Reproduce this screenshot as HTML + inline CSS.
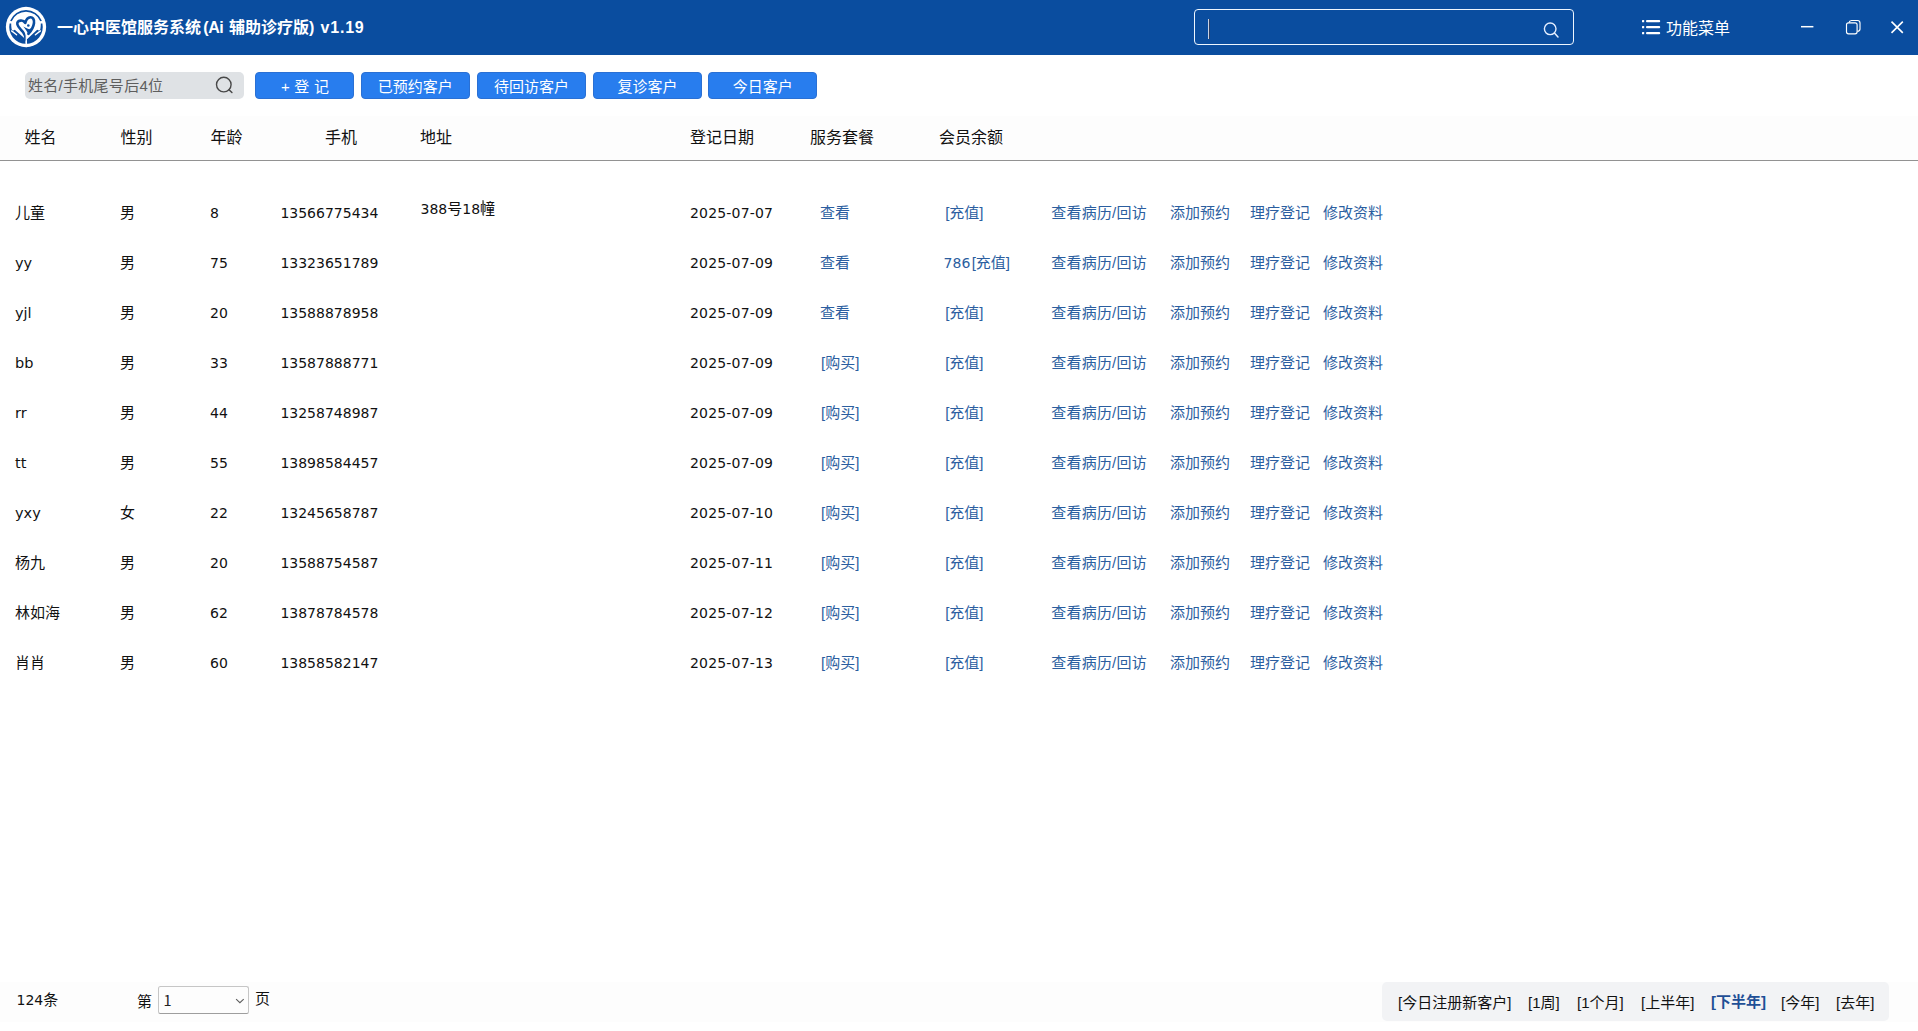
<!DOCTYPE html>
<html lang="zh-CN"><head><meta charset="utf-8"><title>一心中医馆服务系统</title>
<style>
*{box-sizing:border-box;margin:0;padding:0}
html,body{width:1918px;height:1031px;overflow:hidden;background:#fff}
body{position:relative;font-family:"Liberation Sans","Noto Sans CJK SC",sans-serif;font-size:15px;color:#111}
.abs{position:absolute;white-space:nowrap}
.n,.d{font-family:"DejaVu Sans","Noto Sans CJK SC",sans-serif;font-size:14px !important;letter-spacing:0}
.c .d,#ft .d{position:static}
.lat{font-family:"DejaVu Sans","Noto Sans CJK SC",sans-serif;font-size:14.5px !important}
/* title bar */
#tb{position:absolute;left:0;top:0;width:1918px;height:55px;background:#0a4d9f}
#logo{position:absolute;left:4px;top:5px;width:44px;height:44px}
#title{left:0;top:15.5px;height:24px;line-height:24px;font-size:16px;font-weight:bold;color:#fff}
#title span{position:absolute;top:0;white-space:nowrap}
#tsearch{position:absolute;left:1194px;top:9px;width:380px;height:36px;border:1px solid #eef6ff;border-radius:4px}
#caret{position:absolute;left:1208px;top:19px;width:2px;height:20px;background:linear-gradient(90deg,#c9d3e6 0 50%,#2c3e63 50% 100%)}
#menu{left:1666px;top:17px;height:24px;line-height:24px;font-size:16px;color:#fff}
.ico{position:absolute;overflow:visible}
/* toolbar */
#sinput{position:absolute;left:25px;top:72px;width:219px;height:27px;background:#dfe2e5;border-radius:5px}
#sinput span{position:absolute;left:3px;top:0;height:27px;line-height:27px;font-size:15px;color:#5e5e5e;white-space:nowrap;letter-spacing:.28px}
.btn{position:absolute;top:72px;height:27px;line-height:25px;padding-top:1px;background:#287dee;border:1px solid #2a70d4;border-radius:4px;color:#fff;font-size:15px;text-align:center;white-space:nowrap}
/* table header */
#th{position:absolute;left:0;top:116px;width:1918px;height:45px;background:#fdfdfd;border-bottom:1px solid #929292}
#th span{position:absolute;top:10px;height:24px;line-height:24px;font-size:16px;color:#111;white-space:nowrap}
/* rows */
.row{position:absolute;left:0;width:1918px;height:50px}
.c{position:absolute;top:14px;height:24px;line-height:24px;white-space:nowrap;font-size:15px}
a.c{color:#2b5e9f}
.c1{left:15px}.c2{left:120px}.c3{left:210px}.c4{left:280.4px}.c5{left:420.5px;top:10px}.c6{left:690px;letter-spacing:.18px !important}
.c7{left:820px}.c8{left:943.6px}.c9{left:1051.3px;letter-spacing:.2px}.c10{left:1170px}.c11{left:1250px}.c12{left:1323px}
/* footer */
#ft{position:absolute;left:0;top:982px;width:1918px;height:40px;background:#fdfdfd}
#ft .t{position:absolute;height:24px;line-height:24px;font-size:15px;white-space:nowrap}
#sel{position:absolute;left:158px;top:4px;width:90.6px;height:27.6px;border:1px solid #c6c6c6;border-bottom-color:#9e9e9e;border-radius:2.5px;background:#fdfdfd}
#sel span{position:absolute;left:4.4px;top:1px;height:24px;line-height:24px;font-size:14.5px;font-family:"Noto Sans CJK SC",sans-serif;color:#222}
#rng{position:absolute;left:1382px;top:0;width:507px;height:39px;background:#f2f3f5;border-radius:5px}
#rng span{position:absolute;top:9px;height:24px;line-height:24px;font-size:15px;white-space:nowrap}
#rng .on{font-weight:bold;color:#1f4f96;top:8px}
#ibeam{position:absolute;left:481.6px;top:200px;width:2.6px;height:14.6px;background:rgba(110,110,100,.7)}
.c7.br{left:821px}.c8.br{left:945.2px}
.c8 .d{margin-right:1.3px}
</style></head>
<body>
<div id="tb">
<svg id="logo" viewBox="4 5 44 44">
<circle cx="26" cy="27" r="20.15" fill="#fff"/>
<path d="M10.9 21 A16.3 16.3 0 0 1 41.1 21" fill="none" stroke="#0a4d9f" stroke-width="1.7"/>
<path d="M9.6 23.4 A16.8 16.8 0 1 0 42.4 23.4 L40.8 23.4 C40.8 26 40.6 28 40.2 29.8 L38.6 30.6 L37.2 29.7 L27 39.2 L27 44 L25.6 44 L25.6 39.2 L14.8 29.7 L13.4 30.6 L11.8 29.8 C11.4 28 11.2 26 11.2 23.4 Z" fill="#0a4d9f"/>
<path d="M40.4 30.9 L35.4 34.8 M11.6 30.9 L16.6 34.8" stroke="#fff" stroke-width="1.4" stroke-linecap="round" fill="none"/>
<path d="M28.4 33.8 C31 31 33.5 27 34 23 C34.5 19 32.5 17.2 30.5 17.3 C28 17.5 26 20 25.3 23 C24 21 22 20.4 20.5 20.6 C18 20.9 16.9 22.5 17.4 24.5 C18.1 27.5 21 29.5 23 32 C24.8 34.2 25.5 36.5 25.7 39.5" fill="none" stroke="#0a4d9f" stroke-width="2.6" stroke-linejoin="round" stroke-linecap="round"/>
<path d="M22.8 26.6 C25 27.2 27.5 29.2 29.3 29.3 L33.5 26.5 L28.5 35.2 C27.5 32 25.5 29 22.8 26.6 Z" fill="#0a4d9f"/>
<path d="M21.6 26.3 C23.8 28 25.8 31 26.3 36 L26.3 46.6" stroke="#fff" stroke-width="1.3" fill="none" stroke-linecap="round"/>
<circle cx="28.3" cy="25.5" r="1.3" fill="#0a4d9f"/>
</svg>
<div id="title" class="abs"><span style="left:57px">一心中医馆服务系统</span><span id="t2" style="left:203.3px;letter-spacing:-.5px">(Ai </span><span style="left:229px">辅助诊疗版</span><span id="t4" style="left:309px">)</span><span id="t5" style="left:320.5px;letter-spacing:.8px"> v1.19</span></div>
<div id="tsearch"></div><div id="caret"></div>
<svg class="ico" style="left:1540px;top:18px" width="22" height="22" viewBox="1540 18 22 22"><circle cx="1550.2" cy="28.8" r="5.8" fill="none" stroke="#e6efff" stroke-width="1.4"/><path d="M1554.4 33 L1558 36.9" stroke="#e6efff" stroke-width="1.5" stroke-linecap="round"/></svg>
<svg class="ico" style="left:1640px;top:18px" width="24" height="18" viewBox="1640 18 24 18" fill="#fff"><rect x="1642" y="20" width="2.2" height="2.2" rx=".5"/><rect x="1642" y="26" width="2.2" height="2.2" rx=".5"/><rect x="1642" y="32" width="2.2" height="2.2" rx=".5"/><rect x="1646" y="20" width="14.2" height="2.2" rx="1"/><rect x="1646" y="26" width="14.2" height="2.2" rx="1"/><rect x="1646" y="32" width="14.2" height="2.2" rx="1"/></svg>
<div id="menu" class="abs">功能菜单</div>
<svg class="ico" style="left:1795px;top:15px" width="115" height="25" viewBox="1795 15 115 25" fill="none" stroke="#fff" stroke-width="1.15"><path d="M1801 26.7 H1813.4" stroke-width="1.5"/><rect x="1846.5" y="22.8" width="10.6" height="11" rx="2"/><path d="M1849 22.6 C1849.3 21 1850 20.5 1851.5 20.5 H1857.5 C1859.3 20.5 1860 21.2 1860 23 V29 C1860 30.6 1859.3 31.2 1857.4 31.4"/><path d="M1891.5 21.6 L1902.8 32.9 M1902.8 21.6 L1891.5 32.9" stroke-width="1.6"/></svg>
</div>
<div id="sinput"><span>姓名/手机尾号后4位</span>
<svg class="ico" style="left:186px;top:3px" width="24" height="22" viewBox="211 75 24 22"><circle cx="223.8" cy="84.6" r="7.3" fill="none" stroke="#484848" stroke-width="1.4"/><path d="M229 89.8 L231.9 92.5" stroke="#484848" stroke-width="1.5" stroke-linecap="round"/></svg>
</div>
<div class="btn" style="left:255px;width:99px;word-spacing:.5px;padding-left:1px">+ 登 记</div>
<div class="btn" style="left:361px;width:108.7px">已预约客户</div>
<div class="btn" style="left:477px;width:109px">待回访客户</div>
<div class="btn" style="left:593px;width:109px">复诊客户</div>
<div class="btn" style="left:708.3px;width:108.7px">今日客户</div>
<div id="th">
<span style="left:24.5px">姓名</span><span style="left:120.5px">性别</span><span style="left:210.5px">年龄</span><span style="left:325px">手机</span><span style="left:420px">地址</span><span style="left:690px">登记日期</span><span style="left:810px">服务套餐</span><span style="left:939px">会员余额</span>
</div>
<div class="rows">
<div class="row" style="top:187px"><span class="c c1">儿童</span><span class="c c2">男</span><span class="c c3 n">8</span><span class="c c4 n">13566775434</span><span class="c c5"><span class="d">388</span>号<span class="d">18</span>幢</span><span class="c c6 n">2025-07-07</span><a class="c c7">查看</a><a class="c c8 br">[充值]</a><a class="c c9">查看病历/回访</a><a class="c c10">添加预约</a><a class="c c11">理疗登记</a><a class="c c12">修改资料</a></div>
<div class="row" style="top:237px"><span class="c c1 lat">yy</span><span class="c c2">男</span><span class="c c3 n">75</span><span class="c c4 n">13323651789</span><span class="c c6 n">2025-07-09</span><a class="c c7">查看</a><a class="c c8"><span class="d">786</span>[充值]</a><a class="c c9">查看病历/回访</a><a class="c c10">添加预约</a><a class="c c11">理疗登记</a><a class="c c12">修改资料</a></div>
<div class="row" style="top:287px"><span class="c c1 lat">yjl</span><span class="c c2">男</span><span class="c c3 n">20</span><span class="c c4 n">13588878958</span><span class="c c6 n">2025-07-09</span><a class="c c7">查看</a><a class="c c8 br">[充值]</a><a class="c c9">查看病历/回访</a><a class="c c10">添加预约</a><a class="c c11">理疗登记</a><a class="c c12">修改资料</a></div>
<div class="row" style="top:337px"><span class="c c1 lat">bb</span><span class="c c2">男</span><span class="c c3 n">33</span><span class="c c4 n">13587888771</span><span class="c c6 n">2025-07-09</span><a class="c c7 br">[购买]</a><a class="c c8 br">[充值]</a><a class="c c9">查看病历/回访</a><a class="c c10">添加预约</a><a class="c c11">理疗登记</a><a class="c c12">修改资料</a></div>
<div class="row" style="top:387px"><span class="c c1 lat">rr</span><span class="c c2">男</span><span class="c c3 n">44</span><span class="c c4 n">13258748987</span><span class="c c6 n">2025-07-09</span><a class="c c7 br">[购买]</a><a class="c c8 br">[充值]</a><a class="c c9">查看病历/回访</a><a class="c c10">添加预约</a><a class="c c11">理疗登记</a><a class="c c12">修改资料</a></div>
<div class="row" style="top:437px"><span class="c c1 lat">tt</span><span class="c c2">男</span><span class="c c3 n">55</span><span class="c c4 n">13898584457</span><span class="c c6 n">2025-07-09</span><a class="c c7 br">[购买]</a><a class="c c8 br">[充值]</a><a class="c c9">查看病历/回访</a><a class="c c10">添加预约</a><a class="c c11">理疗登记</a><a class="c c12">修改资料</a></div>
<div class="row" style="top:487px"><span class="c c1 lat">yxy</span><span class="c c2">女</span><span class="c c3 n">22</span><span class="c c4 n">13245658787</span><span class="c c6 n">2025-07-10</span><a class="c c7 br">[购买]</a><a class="c c8 br">[充值]</a><a class="c c9">查看病历/回访</a><a class="c c10">添加预约</a><a class="c c11">理疗登记</a><a class="c c12">修改资料</a></div>
<div class="row" style="top:537px"><span class="c c1">杨九</span><span class="c c2">男</span><span class="c c3 n">20</span><span class="c c4 n">13588754587</span><span class="c c6 n">2025-07-11</span><a class="c c7 br">[购买]</a><a class="c c8 br">[充值]</a><a class="c c9">查看病历/回访</a><a class="c c10">添加预约</a><a class="c c11">理疗登记</a><a class="c c12">修改资料</a></div>
<div class="row" style="top:587px"><span class="c c1">林如海</span><span class="c c2">男</span><span class="c c3 n">62</span><span class="c c4 n">13878784578</span><span class="c c6 n">2025-07-12</span><a class="c c7 br">[购买]</a><a class="c c8 br">[充值]</a><a class="c c9">查看病历/回访</a><a class="c c10">添加预约</a><a class="c c11">理疗登记</a><a class="c c12">修改资料</a></div>
<div class="row" style="top:637px"><span class="c c1">肖肖</span><span class="c c2">男</span><span class="c c3 n">60</span><span class="c c4 n">13858582147</span><span class="c c6 n">2025-07-13</span><a class="c c7 br">[购买]</a><a class="c c8 br">[充值]</a><a class="c c9">查看病历/回访</a><a class="c c10">添加预约</a><a class="c c11">理疗登记</a><a class="c c12">修改资料</a></div>
<div id="ibeam"></div></div>
<div id="ft">
<span class="t" style="left:16.5px;top:6px"><span class="d">124</span>条</span>
<span class="t" style="left:137px;top:8px">第</span>
<div id="sel"><span>1</span><svg class="ico" style="left:76px;top:11px" width="11" height="7" viewBox="235 998 11 7"><path d="M236.1 999.1 L239.9 1002.7 L243.7 999.1" fill="none" stroke="#5c5c5c" stroke-width="1.05"/></svg></div>
<span class="t" style="left:255px;top:5px">页</span>
<div id="rng">
<span style="left:16px">[今日注册新客户]</span><span style="left:146px">[1周]</span><span style="left:195px">[1个月]</span><span style="left:259px">[上半年]</span><span class="on" style="left:329px">[下半年]</span><span style="left:399px">[今年]</span><span style="left:454px">[去年]</span>
</div>
</div>
</body></html>
